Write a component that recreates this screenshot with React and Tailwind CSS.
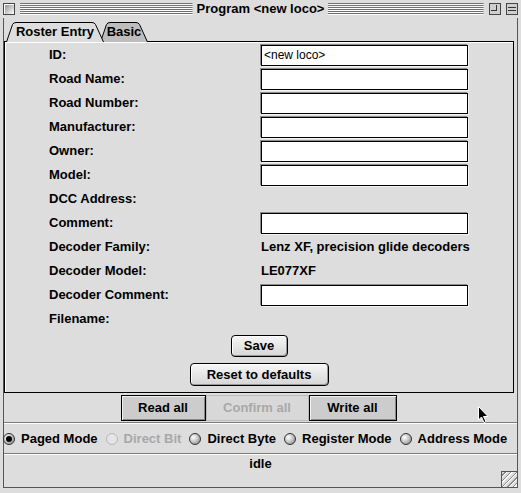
import React from "react";

const fields = [
  { label: "ID:", input: "<new loco>" },
  { label: "Road Name:", input: "" },
  { label: "Road Number:", input: "" },
  { label: "Manufacturer:", input: "" },
  { label: "Owner:", input: "" },
  { label: "Model:", input: "" },
  { label: "DCC Address:" },
  { label: "Comment:", input: "" },
  { label: "Decoder Family:", text: "Lenz XF, precision glide decoders" },
  { label: "Decoder Model:", text: "LE077XF" },
  { label: "Decoder Comment:", input: "" },
  { label: "Filename:" },
];

const modes = [
  { name: "Paged Mode", checked: true },
  { name: "Direct Bit", disabled: true },
  { name: "Direct Byte" },
  { name: "Register Mode" },
  { name: "Address Mode" },
];

function Radio({ checked, disabled }) {
  if (disabled) {
    return <span className="w-[12px] h-[12px] rounded-full border border-[#b8b8b8] bg-[#e4e4e4]" />;
  }
  return (
    <span className="w-[12px] h-[12px] rounded-full border border-[#333] bg-[image:radial-gradient(circle_at_35%_35%,#ffffff_0,#c8c8c8_45%,#777_100%)] flex items-center justify-center">
      {checked && <span className="w-[6px] h-[6px] rounded-full bg-black" />}
    </span>
  );
}

function Tab({ label, active, width }) {
  return (
    <div className={"relative h-[20px] flex items-end " + (active ? "z-10" : "-ml-[4px]")} style={{ width }}>
      <svg className="absolute inset-0" width={width} height="20" viewBox={`0 0 ${width} 20`}>
        <path
          d={`M0.5 20 L6.5 2.5 Q7.5 0.5 10 0.5 L${width - 12} 0.5 Q${width - 9.5} 0.5 ${width - 8.5} 2.5 L${width - 0.5} 20`}
          fill={active ? "#dddddd" : "#bdbdbd"}
          stroke="#000"
        />
      </svg>
      <span className="relative w-full text-center pb-[1px] text-[13px] font-bold leading-[18px]">{label}</span>
    </div>
  );
}

function Stripes() {
  return (
    <svg className="flex-1 min-w-0 block" height="12" preserveAspectRatio="none" viewBox="0 0 100 12">
      {[0, 2, 4, 6, 8, 10].map((y) => (
        <g key={y}>
          <rect x="0" y={y} width="100" height="1" fill="#707070" />
          <rect x="0" y={y + 1} width="100" height="1" fill="#fafafa" />
        </g>
      ))}
    </svg>
  );
}

const App = () => {
  return (
    <div className="relative w-[521px] h-[493px] bg-[#dddddd] overflow-hidden font-['Liberation_Sans',Arial,sans-serif] text-black select-none">
      {/* title bar */}
      <div className="h-[18px] flex items-center px-[3px]">
        <div className="flex-1 basis-0 flex items-center gap-[5px]">
          <span className="w-[12px] h-[12px] border border-[#444] bg-[image:linear-gradient(135deg,#888,#fff)] shadow-[inset_1px_1px_0_#fff]" />
          <Stripes />
        </div>
        <span className="px-[4px] text-[13px] font-bold leading-[16px]">Program &lt;new loco&gt;</span>
        <div className="flex-1 basis-0 flex items-center gap-[5px]">
          <Stripes />
          <span className="w-[12px] h-[12px] border border-[#444] bg-[#cfcfcf] relative">
            <span className="absolute left-[1px] top-[1px] w-[6px] h-[6px] border-r border-b border-[#333]" />
          </span>
          <span className="w-[12px] h-[12px] border border-[#444] bg-[#cfcfcf] flex flex-col justify-center gap-[2px] px-[1px]">
            <span className="h-[1px] bg-[#333]" />
            <span className="h-[1px] bg-[#333]" />
          </span>
        </div>
      </div>

      <div className="h-[470px] mx-[3px] border-l border-r border-b border-[#555] flex flex-col">
        {/* tabs */}
        <div className="flex pl-[2px] pt-[4px] h-[24px] -mb-[1px]">
          <Tab label="Roster Entry" active width={98} />
          <Tab label="Basic" width={48} />
        </div>

        {/* pane */}
        <div className="h-[352px] mr-[3px] border border-black shadow-[inset_1px_1px_0_#fff] flex flex-col">
          <div className="pt-[1px]">
            {fields.map((f) => (
              <div key={f.label} className="h-[24px] flex items-center">
                <span className="w-[256px] pl-[44px] text-[13px] font-bold">{f.label}</span>
                {f.input !== undefined && (
                  <span className="w-[207px] h-[21px] border border-black bg-white shadow-[-1px_-1px_0_#8c8c8c,1px_1px_0_#f4f4f4] px-[2px] text-[12px] leading-[19px]">
                    {f.input}
                  </span>
                )}
                {f.text && <span className="text-[13px] font-bold">{f.text}</span>}
              </div>
            ))}
          </div>
          <div className="flex flex-col items-center gap-[6px] mt-[4px]">
            <button className="w-[57px] h-[22px] rounded-[4px] border border-black bg-[image:linear-gradient(#f6f6f6,#d6d6d6)] shadow-[inset_-1px_-1px_0_#999,inset_1px_1px_0_#fff] text-[13px] font-bold">
              Save
            </button>
            <button className="w-[139px] h-[23px] rounded-[4px] border border-black bg-[image:linear-gradient(#f6f6f6,#d6d6d6)] shadow-[inset_-1px_-1px_0_#999,inset_1px_1px_0_#fff] text-[13px] font-bold">
              Reset to defaults
            </button>
          </div>
        </div>

        {/* read / write */}
        <div className="h-[29px] flex items-center justify-center pr-[4px]">
          <button className="w-[85px] h-[26px] border border-black bg-[#cccccc] shadow-[inset_1px_1px_0_#f0f0f0,inset_-1px_-1px_0_#888] text-[13px] font-bold">
            Read all
          </button>
          <button className="w-[103px] h-[26px] border border-[#bbb] bg-[#d8d8d8] text-[13px] font-bold text-[#a8a8a8]">
            Confirm all
          </button>
          <button className="w-[88px] h-[26px] border border-black bg-[#cccccc] shadow-[inset_1px_1px_0_#f0f0f0,inset_-1px_-1px_0_#888] text-[13px] font-bold">
            Write all
          </button>
        </div>

        <div className="h-[1px] bg-[#7a7a7a] border-b border-white box-content" />

        {/* modes */}
        <div className="h-[29px] flex items-center -ml-[1px] gap-[8px]">
          {modes.map((m) => (
            <label key={m.name} className="flex items-center gap-[6px]">
              <Radio checked={m.checked} disabled={m.disabled} />
              <span className={"text-[13px] font-bold " + (m.disabled ? "text-[#a8a8a8]" : "")}>{m.name}</span>
            </label>
          ))}
        </div>

        <div className="h-[1px] bg-[#7a7a7a] border-b border-white box-content" />

        <div className="flex-1 flex justify-center text-[13px] font-bold leading-[16px] pt-[1px] relative">
          idle
          <div className="absolute right-0 bottom-0 w-[16px] h-[16px] border-l border-t border-[#555] bg-[image:repeating-linear-gradient(135deg,#ddd_0px,#ddd_2px,#888_2px,#888_3px,#fff_3px,#fff_4px)]" />
        </div>
      </div>

      {/* mouse cursor */}
      <svg className="absolute left-[478px] top-[406px]" width="12" height="18" viewBox="0 0 12 18">
        <path d="M0.5 0.5 L0.5 14 L3.5 11 L6 16.5 L8 15.5 L5.5 10.5 L10 10.5 Z" fill="#000" stroke="#fff" strokeWidth="1" />
      </svg>
    </div>
  );
};

export default App;
